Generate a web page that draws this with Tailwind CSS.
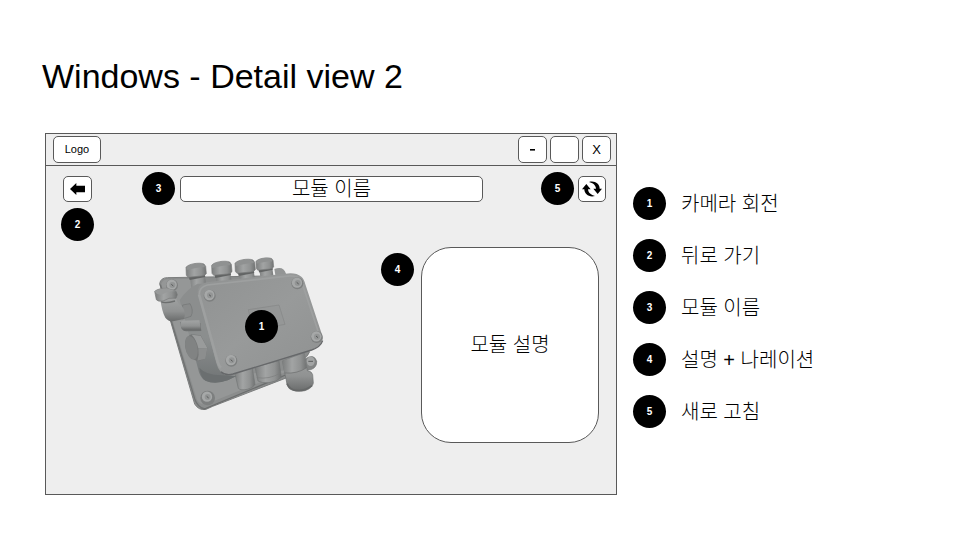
<!DOCTYPE html>
<html lang="ko">
<head>
<meta charset="utf-8">
<meta name="viewport" content="width=device-width, initial-scale=1">
<title>Windows - Detail view 2</title>
<script src="https://cdn.jsdelivr.net/npm/@tailwindcss/browser@4"></script>
</head>
<body class="bg-white text-black font-['Liberation_Sans','Noto_Sans_CJK_KR',sans-serif]">
<header class="px-[42px] pt-14">
  <h1 class="text-[34px] leading-10">Windows - Detail view 2</h1>
</header>
<main class="mt-[37px] flex items-start pl-[45px]">
  <section class="min-w-0 flex-1 border border-[#595959] bg-[#eeeeee] pb-[51px]" aria-label="Detail view">
    <div class="flex h-8 items-center gap-[3px] border-b border-[#595959] pl-[7px] pr-[5px]">
      <a href="#" class="mr-auto flex h-[27px] w-12 items-center justify-center rounded-[5px] border border-[#595959] bg-white text-[11px]">Logo</a>
      <button type="button" aria-label="Minimize" class="flex h-[27px] w-[29px] items-center justify-center rounded-[5px] border border-[#595959] bg-white"><svg class="w-[5px]" viewBox="0 0 5 2" aria-hidden="true"><path d="M0 0h5v1.6H0z"/></svg></button>
      <button type="button" aria-label="Maximize" class="h-[27px] w-[29px] rounded-[5px] border border-[#595959] bg-white"></button>
      <button type="button" aria-label="Close" class="flex h-[27px] w-[29px] items-center justify-center rounded-[5px] border border-[#595959] bg-white text-[13px]">X</button>
    </div>

    <div class="flex items-center pl-[17px] pr-[10px] pt-[6px]">
      <button type="button" aria-label="뒤로 가기" class="flex h-[26px] w-[29px] items-center justify-center rounded-[5px] border border-[#595959] bg-white">
        <svg class="h-3 w-[15px]" viewBox="0 0 45 36" aria-hidden="true"><path d="M0 18 19 0v8h26v20H19v8z"/></svg>
      </button>
      <span class="ml-[50px] flex size-[33px] shrink-0 items-center justify-center rounded-full bg-black text-[10px] font-bold text-white">3</span>
      <h2 class="ml-[5px] flex h-[26px] flex-1 items-center justify-center rounded-[5px] border border-[#595959] bg-white text-xl leading-6 font-light">모듈 이름</h2>
      <span class="ml-[58px] flex size-[33px] shrink-0 items-center justify-center rounded-full bg-black text-[10px] font-bold text-white">5</span>
      <button type="button" aria-label="새로 고침" class="ml-1 flex h-[26px] w-7 items-center justify-center rounded-[5px] border border-[#595959] bg-white">
        <svg class="h-4 w-5 shrink-0" viewBox="0 0 60 48" aria-hidden="true"><path d="M21 3C38-2 53 8 53 23h7L47 39 34 23h8C41 12 33 6 21 3z"/><path d="M39 45C22 50 7 40 7 25H0L13 9l13 16h-8c1 11 9 17 21 20z"/></svg>
      </button>
    </div>

    <div class="flex items-start pl-[15px] pr-[17px]">
      <span class="mt-[3px] flex size-[33px] shrink-0 items-center justify-center rounded-full bg-black text-[10px] font-bold text-white">2</span>
      <div class="relative mt-10 ml-[51px] w-[190px] shrink-0">
        <svg class="block w-full" viewBox="0 0 570 525" role="img" aria-label="모듈">
          <defs>
            <linearGradient id="face" x1="0" y1="0" x2="1" y2="1"><stop offset="0" stop-color="#909292"/><stop offset=".5" stop-color="#989a9a"/><stop offset="1" stop-color="#8f9191"/></linearGradient>
            <linearGradient id="side" x1="0" y1="0" x2="0" y2="1"><stop offset="0" stop-color="#8c8e8e"/><stop offset=".55" stop-color="#8b8e8e"/><stop offset="1" stop-color="#707475"/></linearGradient>
            <linearGradient id="tube" x1="0" y1="0" x2="1" y2="0"><stop offset="0" stop-color="#7c7e7e"/><stop offset=".4" stop-color="#a2a4a4"/><stop offset=".75" stop-color="#909292"/><stop offset="1" stop-color="#707272"/></linearGradient>
            <linearGradient id="down" x1="0" y1="0" x2="0" y2="1"><stop offset="0" stop-color="#a2a4a4"/><stop offset=".6" stop-color="#909292"/><stop offset="1" stop-color="#696b6b"/></linearGradient>
            <g id="gland">
              <path d="M10 28h45l8 54-45 10z" fill="url(#tube)"/>
              <path d="M8 40l48-7 2 9-47 9z" fill="#626464"/>
              <path d="M0 13C6 3 39-3 54 3l5 7 2 22q-5 7-14 7L6 43l-5-6z" fill="url(#tube)" stroke="#777979" stroke-width="2"/>
              <path d="M1 14C6 4 40-3 57 8l-2 5-13 0-23 4L2 21z" fill="#8f9191"/>
            </g>
            <g id="screw">
              <circle r="18" fill="#7d7f7f"/><circle cx="-1" cy="-2" r="15.5" fill="#a6a8a8"/><circle cx="1" cy="-1" r="9" fill="#939595"/><path d="M-2-3 4 2" stroke="#555757" stroke-width="3"/>
            </g>
          </defs>
          <path d="M388 72q28-10 35 14l6 15-35 8z" fill="#939595"/>
          <path d="M44 116q3-18 23-18l357-6 69 230q-5 15-22 21l20 30-60 23-228 88-20 9q-22 4-34-16z" fill="#8b8d8d" stroke="#7b7d7d" stroke-width="3"/>
          <path d="M49 117q3-14 20-14l100-2-45 50 71 245 230-20-10 8-225 91q-22 9-34-11z" fill="#959797"/>
          <path d="M46 119 149 461q9 27 31 31" fill="none" stroke="#707272" stroke-width="4"/>
          <path d="M178 492 436 384" fill="none" stroke="#6b6d6d" stroke-width="4"/>
          <use href="#screw" x="81" y="121"/>
          <circle cx="188" cy="459" r="22" fill="#7d7f7f"/>
          <use href="#screw" x="187" y="457"/>
          <path d="M480 342q27-18 35 7 1 17-15 24l-20 5z" fill="#838585" stroke="#707272" stroke-width="2"/>
          <ellipse cx="497" cy="349" rx="12" ry="14" fill="#a3a5a5"/><path d="M490 349h14" stroke="#5a5c5c" stroke-width="3"/>

          <use href="#gland" x="123" y="54"/>
          <use href="#gland" x="200" y="48"/>
          <use href="#gland" x="270" y="42"/>
          <g transform="translate(333 38) scale(.87)"><use href="#gland"/></g>

          <path d="M269 382l53-12 8 48q-4 10-23 15-20 4-27-3z" fill="url(#tube)" stroke="#737575" stroke-width="2"/>
          <path d="M330 366l72-19 7 50q-13 13-37 16-22 2-33-5z" fill="url(#tube)" stroke="#737575" stroke-width="2"/>
          <path d="M335 398q38 6 72-14" fill="none" stroke="#7b7d7d" stroke-width="2"/>
          <path d="M412 348l66-23 9 52q14 2 16 12l2 25q-2 15-25 23-29 6-47-6-8-7-10-29z" fill="url(#down)" stroke="#707272" stroke-width="2"/>
          <path d="M412 348l66-23 7 43q-30 17-66 16z" fill="url(#tube)"/>
          <path d="M419 384q38 3 66-16" fill="none" stroke="#6b6d6d" stroke-width="2"/>
          <path d="M426 416q9 19 27 20 26 3 48-14" fill="none" stroke="#666868" stroke-width="5"/>

          <path d="M104 165q22-34 54-49h40l40 274 36 3-24 12q-41 14-67 3-14-6-21-26z" fill="url(#side)"/>
          <path d="M163 368q19 22 65 23l46 2-26 13q-39 14-66 1-15-9-19-39z" fill="#6b6f70"/>
          <path d="M158 142q1-25 27-30l236-26q31-5 48 9 8 6 12 23l51 154q5 16-8 28-6 8-30 17L260 388q-20 6-34-9-8-9-12-25z" fill="url(#face)"/>
          <path d="M228 380q14 13 36 7l236-72q27-9 33-28" fill="none" stroke="#66686a" stroke-width="4"/>
          <path d="M163 148q0-22 24-28l234-26q30-4 42 6 7 5 10 20l50 150" fill="none" stroke="#9ea0a0" stroke-width="5"/>
          <path d="M228 368q-8-7-12-25L162 148" fill="none" stroke="#9ea0a0" stroke-width="8"/>
          <path d="M310 194l92-14 18 58-96 18z" fill="#959797" stroke="#858787" stroke-width="2"/>
          <use href="#screw" x="194" y="152"/>
          <use href="#screw" x="457" y="115"/>
          <use href="#screw" x="515" y="276"/>
          <use href="#screw" x="259" y="347"/>

          <path d="M105 232l5 20q6 8 15 7l44-1-3-24z" fill="#6e7070"/>
          <path d="M112 227q-9 5-4 20 5 8 13 7l47-1-5-27z" fill="url(#down)"/>
          <path d="M113 180l22-4q12 20 3 38l-26 8z" fill="#898b8b" stroke="#737575" stroke-width="2"/>
          <path d="M46 162l46-9q5 27 18 29 14 18 7 40l-33 7q-14 1-23-11-10-16-15-56z" fill="url(#down)"/>
          <path d="M48 170q12 7 42-2" fill="none" stroke="#6c6e6e" stroke-width="4"/>
          <path d="M29 139q12-10 37-9l27 9 4 10-4 11q-22-4-39 8-15 3-20-4z" fill="url(#tube)" stroke="#777979" stroke-width="2"/>
          <path d="M29 139q14-9 37-9l27 9q-25-2-40 9-17 4-24-9z" fill="#989a9a"/>
          <path d="M120 302q-1-26 19-34l28 3 20 37-6 33-23 8q-32-8-38-47z" fill="#757777"/>
          <ellipse cx="139" cy="308" rx="18" ry="36" transform="rotate(-13 139 308)" fill="#818383"/>
          <path d="M140 269l27 3 20 37-27 1q-5-25-20-41z" fill="#999b9b"/>
          <path d="M160 310l27-1-6 32-24 6q6-17 3-37z" fill="#8c8e8e"/>
        </svg>
        <span class="absolute top-[65px] left-[100px] flex size-[33px] items-center justify-center rounded-full bg-black text-[10px] font-bold text-white">1</span>
      </div>
      <span class="mt-12 ml-auto flex size-[33px] shrink-0 items-center justify-center rounded-full bg-black text-[10px] font-bold text-white">4</span>
      <div class="mt-[42px] ml-[7px] flex h-[196px] w-[178px] items-center justify-center rounded-[30px] border border-[#595959] bg-white">
        <p class="text-xl leading-6 font-light">모듈 설명</p>
      </div>
    </div>
  </section>

  <ol class="ml-4 mt-[54px] flex w-[327px] shrink-0 flex-col gap-[19px] text-xl leading-6 font-light">
    <li class="flex items-center gap-[15px]"><span class="flex size-[33px] items-center justify-center rounded-full bg-black text-[10px] font-bold text-white">1</span>카메라 회전</li>
    <li class="flex items-center gap-[15px]"><span class="flex size-[33px] items-center justify-center rounded-full bg-black text-[10px] font-bold text-white">2</span>뒤로 가기</li>
    <li class="flex items-center gap-[15px]"><span class="flex size-[33px] items-center justify-center rounded-full bg-black text-[10px] font-bold text-white">3</span>모듈 이름</li>
    <li class="flex items-center gap-[15px]"><span class="flex size-[33px] items-center justify-center rounded-full bg-black text-[10px] font-bold text-white">4</span>설명 + 나레이션</li>
    <li class="flex items-center gap-[15px]"><span class="flex size-[33px] items-center justify-center rounded-full bg-black text-[10px] font-bold text-white">5</span>새로 고침</li>
  </ol>
</main>
</body>
</html>
